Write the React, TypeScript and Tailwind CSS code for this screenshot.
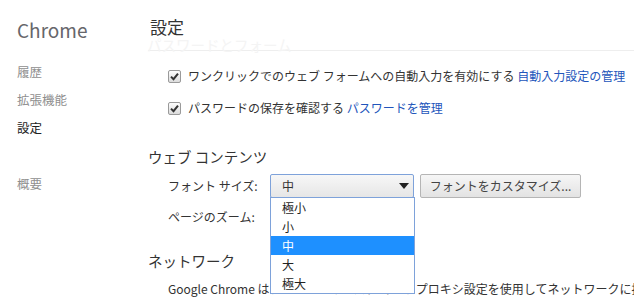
import React from "react";

const F = { fontFamily: '"Noto Sans CJK JP", "Noto Sans", sans-serif' };

function Check() {
  return (
    <div className="w-[13px] h-[13px] border border-[#9a9a9a] rounded-[2px] bg-gradient-to-b from-[#fdfdfd] to-[#dcdcdc] flex items-center justify-center shrink-0">
      <svg width="9" height="9" viewBox="0 0 9 9">
        <path d="M1 4.6 L3.5 7.2 L8 1.6" stroke="#333" strokeWidth="2" fill="none" />
      </svg>
    </div>
  );
}

export default function App() {
  const items = ["極小", "小", "中", "大", "極大"];
  return (
    <div className="w-[634px] h-[304px] overflow-hidden bg-white flex text-[#333]" style={F}>
      <div className="w-[148px] shrink-0 pl-[17px] pt-[16px] flex flex-col">
        <div className="text-[19px] leading-[28px] text-[#66666b]">Chrome</div>
        <div className="mt-[13px] flex flex-col text-[12.5px] text-[#8f8f8f]">
          <div className="h-[29px] leading-[29px]">履歴</div>
          <div className="h-[28px] leading-[28px]">拡張機能</div>
          <div className="h-[28px] leading-[28px] text-[#222]">設定</div>
          <div className="h-[28px] leading-[28px] mt-[28px]">概要</div>
        </div>
      </div>
      <div className="flex-1 flex flex-col min-w-0">
        <div className="h-[51px] border-b border-[#eeeeee] pt-[15px] flex flex-col">
          <div className="text-[17px] leading-[24px] text-[#333] pl-[2px]">設定</div>
          <div className="text-[14.5px] leading-[12px] text-[#f4f4f4] -ml-[1px] whitespace-nowrap">パスワードとフォーム</div>
        </div>
        <div className="pl-[20px] text-[12px] flex flex-col">
          <div className="flex items-center gap-[7px] h-[20px] mt-[15px] whitespace-nowrap">
            <Check />
            <span>
              ワンクリックでのウェブ フォームへの自動入力を有効にする <span className="text-[#2255bb]">自動入力設定の管理</span>
            </span>
          </div>
          <div className="flex items-center gap-[7px] h-[20px] mt-[12px] whitespace-nowrap">
            <Check />
            <span>
              パスワードの保存を確認する <span className="text-[#2255bb]">パスワードを管理</span>
            </span>
          </div>
        </div>
        <div className="text-[14.5px] leading-[20px] mt-[29px] whitespace-nowrap">ウェブ コンテンツ</div>
        <div className="pl-[20px] text-[12px] flex flex-col">
          <div className="relative flex items-center h-[23px] mt-[7px] whitespace-nowrap">
            <span className="w-[102px]">フォント サイズ:</span>
            <div className="w-[144px] h-[24px] border border-[#7ea2da] rounded-[2px] bg-gradient-to-b from-[#f7f7f7] to-[#e6e6e6] flex items-center justify-between pl-[11px] pr-[4px]">
              <span>中</span>
              <svg width="10" height="6" viewBox="0 0 10 6">
                <path d="M0 0 L10 0 L5 6 Z" fill="#222" />
              </svg>
            </div>
            <div className="ml-[6px] w-[161px] h-[24px] border border-[#b5b5b5] rounded-[2px] bg-gradient-to-b from-[#f6f6f6] to-[#e3e3e3] flex items-center justify-center text-[#444]">
              フォントをカスタマイズ...
            </div>
            <div className="absolute left-[102px] top-[23px] w-[145px] border border-[#7ea2da] bg-white flex flex-col z-10">
              {items.map((it) => (
                <div
                  key={it}
                  className={
                    it === "中"
                      ? "h-[19px] leading-[19px] pl-[11px] bg-[#1e90ff] text-white"
                      : "h-[19px] leading-[19px] pl-[11px] text-[#222]"
                  }
                >
                  {it}
                </div>
              ))}
            </div>
          </div>
          <div className="h-[20px] leading-[20px] mt-[10px] whitespace-nowrap">ページのズーム:</div>
        </div>
        <div className="text-[14.5px] leading-[20px] mt-[24px] whitespace-nowrap">ネットワーク</div>
        <div className="pl-[20px] text-[12px] leading-[20px] mt-[8px] whitespace-nowrap">
          Google Chrome は、パソコンのシステム上の プロキシ設定を使用してネットワークに接続します。
        </div>
      </div>
    </div>
  );
}
